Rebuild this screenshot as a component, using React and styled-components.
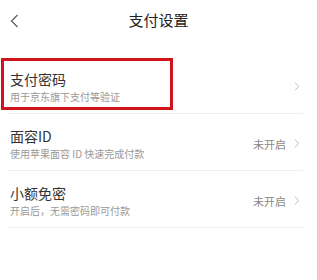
import React from 'react';
import styled, { createGlobalStyle } from 'styled-components';

const GlobalStyle = createGlobalStyle`
  body {
    margin: 0;
    background: #ffffff;
    font-family: "Noto Sans CJK SC", "Noto Sans", sans-serif;
  }
`;

const Page = styled.div`
  width: 317px;
  height: 280px;
  background: #ffffff;
`;

const Header = styled.div`
  position: relative;
  height: 40px;
  display: flex;
  align-items: center;
  justify-content: center;
`;

const Back = styled.div`
  position: absolute;
  left: 10px;
  top: 14px;
  width: 10px;
  height: 14px;
  display: flex;
`;

const HeaderTitle = styled.h1`
  margin: 0;
  font-size: 15px;
  font-weight: 400;
  color: #222;
  line-height: 20px;
`;

const List = styled.div`
  margin-top: 17px;
`;

const Row = styled.div`
  position: relative;
  margin: 0 14px 0 8px;
  padding: 13px 3px 10px 2px;
  display: flex;
  align-items: center;
  justify-content: space-between;
  border-bottom: 1px solid #f0f0f0;
`;

const Highlight = styled.span`
  position: absolute;
  left: -7px;
  top: 1px;
  width: 166px;
  height: 46px;
  border: 3px solid #d3131c;
  pointer-events: none;
`;

const Texts = styled.div`
  display: flex;
  flex-direction: column;
`;

const Title = styled.div`
  font-size: 14px;
  line-height: 18px;
  color: #333;
`;

const Sub = styled.div`
  margin-top: 3px;
  font-size: 10px;
  line-height: 12px;
  color: #999;
`;

const Right = styled.div`
  display: flex;
  align-items: center;
  gap: 8px;
`;

const Status = styled.span`
  font-size: 11px;
  color: #888;
`;

const Chevron = () => (
  <svg width="6" height="9" viewBox="0 0 6 9">
    <path d="M1 0.8 L4.8 4.5 L1 8.2" fill="none" stroke="#bbb" strokeWidth="1" />
  </svg>
);

const items = [
  { title: '支付密码', sub: '用于京东旗下支付等验证', highlight: true },
  { title: '面容ID', sub: '使用苹果面容 ID 快速完成付款', status: '未开启' },
  { title: '小额免密', sub: '开启后，无需密码即可付款', status: '未开启' },
];

const App = () => (
  <Page>
    <GlobalStyle />
    <Header>
      <Back>
        <svg width="10" height="14" viewBox="0 0 10 14">
          <path d="M7.5 1 L1.5 7 L7.5 13" fill="none" stroke="#555" strokeWidth="1.1" />
        </svg>
      </Back>
      <HeaderTitle>支付设置</HeaderTitle>
    </Header>
    <List>
      {items.map((it) => (
        <Row key={it.title}>
          {it.highlight && <Highlight />}
          <Texts>
            <Title>{it.title}</Title>
            <Sub>{it.sub}</Sub>
          </Texts>
          <Right>
            {it.status && <Status>{it.status}</Status>}
            <Chevron />
          </Right>
        </Row>
      ))}
    </List>
  </Page>
);

export default App;
